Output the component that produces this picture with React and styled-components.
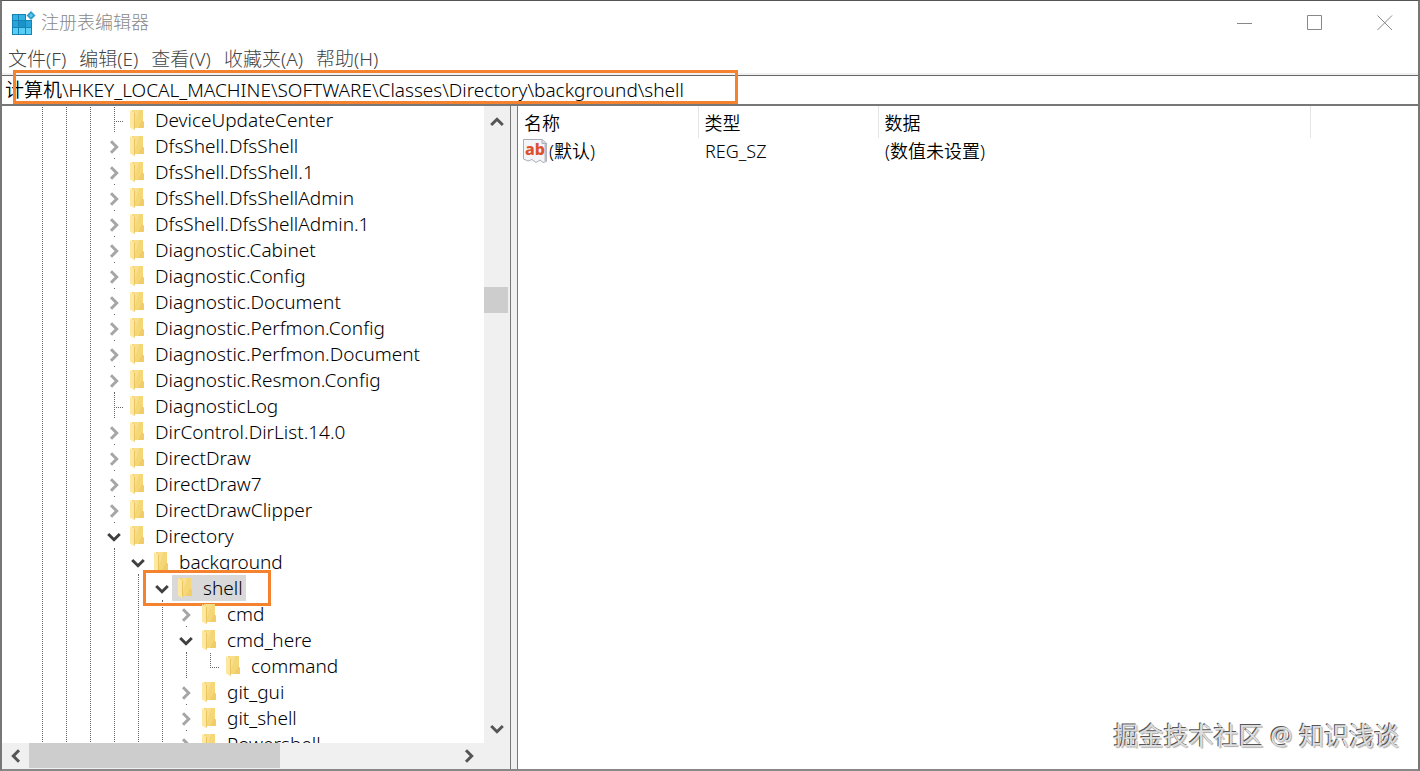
import React, {useState} from 'react'
import styled, {createGlobalStyle} from 'styled-components'

const nodes = [
    {name: 'DeviceUpdateCenter', depth: 3},
    {name: 'DfsShell.DfsShell', depth: 3, state: 'closed'},
    {name: 'DfsShell.DfsShell.1', depth: 3, state: 'closed'},
    {name: 'DfsShell.DfsShellAdmin', depth: 3, state: 'closed'},
    {name: 'DfsShell.DfsShellAdmin.1', depth: 3, state: 'closed'},
    {name: 'Diagnostic.Cabinet', depth: 3, state: 'closed'},
    {name: 'Diagnostic.Config', depth: 3, state: 'closed'},
    {name: 'Diagnostic.Document', depth: 3, state: 'closed'},
    {name: 'Diagnostic.Perfmon.Config', depth: 3, state: 'closed'},
    {name: 'Diagnostic.Perfmon.Document', depth: 3, state: 'closed'},
    {name: 'Diagnostic.Resmon.Config', depth: 3, state: 'closed'},
    {name: 'DiagnosticLog', depth: 3},
    {name: 'DirControl.DirList.14.0', depth: 3, state: 'closed'},
    {name: 'DirectDraw', depth: 3, state: 'closed'},
    {name: 'DirectDraw7', depth: 3, state: 'closed'},
    {name: 'DirectDrawClipper', depth: 3, state: 'closed'},
    {name: 'Directory', depth: 3, state: 'open'},
    {name: 'background', depth: 4, state: 'open'},
    {name: 'shell', depth: 5, state: 'open', marked: true},
    {name: 'cmd', depth: 6, state: 'closed'},
    {name: 'cmd_here', depth: 6, state: 'open'},
    {name: 'command', depth: 7, last: true},
    {name: 'git_gui', depth: 6, state: 'closed'},
    {name: 'git_shell', depth: 6, state: 'closed'},
    {name: 'Powershell', depth: 6, state: 'closed'},
]

const menus = ['文件(F)', '编辑(E)', '查看(V)', '收藏夹(A)', '帮助(H)']

const turns = {right: 0, down: 90, left: 180, up: 270}

function Chevron({to, color}) {
    return (
        <svg width="14" height="14" viewBox="0 0 14 14" aria-hidden="true">
            <path d="M4 1.2 9.700 7 4 12.800" fill="none" stroke={color} strokeWidth="3"
                transform={`rotate(${turns[to]} 7 7)`} />
        </svg>
    )
}

function Folder() {
    return (
        <svg width="14" height="21" viewBox="0 0 14 21" aria-hidden="true">
            <path d="M2 0H13V11L14 12V18H2Z" fill="#f5d778" />
            <path d="M4 0H9L5 14Z" fill="#f9df8d" />
            <path d="M12 10 14 12V18H8Z" fill="#f1cd68" />
            <path d="M0 0 4.5 3V20.5L0 17.5Z" fill="#fde7a2" />
            <path d="M4 3H5V18L4 20Z" fill="#e9c55f" />
        </svg>
    )
}

function RegistryIcon() {
    return (
        <svg width="24" height="24" viewBox="0 0 24 24" aria-hidden="true">
            <path d="M0 3H14V9H20V24H0Z" fill="#1583b5" />
            <path d="M1 4H6V9H1ZM7 4H13V9H7Z" fill="#35b3e3" />
            <path d="M1 10H6V16H1ZM14 10H19V16H14Z" fill="#27a5da" />
            <path d="M7 10H13V16H7Z" fill="#1b93c8" />
            <path d="M1 17H6V23H1ZM7 17H13V23H7ZM14 17H19V23H14Z" fill="#58cdf5" />
            <path d="M19 0 23.5 4.5 19 9 14.5 4.5Z" fill="#2b9fce" />
            <path d="M19 2.500 21 4.5 19 6.500 17 4.5Z" fill="#68c4e8" />
        </svg>
    )
}

function StringIcon() {
    return (
        <svg width="24" height="24" viewBox="0 0 24 24" aria-hidden="true">
            <path d="M.5.5H19L23.500 4V22.500L20 23.500 17 21 13 23.500 9 20.500 5 22 .5 20Z" fill="#f4f5f8" stroke="#a9adb5" />
            <path d="M19 .5V4.500H23.500" fill="#ddd" stroke="#a9adb5" />
            <path d="M22.500 5V22" stroke="#b9bcc4" strokeWidth="2" />
            <text x="2" y="16" fontFamily="Noto Sans" fontSize="16" fontWeight="800" fill="#dc5130">ab</text>
        </svg>
    )
}

function TreeRow({node, selected, onSelect}) {
    return (
        <Row>
            {Array.from({length: node.depth}, (_, i) => <Guide key={i} />)}
            {node.state ? (
                <Expander aria-label={node.name}>
                    <Chevron to={node.state === 'open' ? 'down' : 'right'}
                        color={node.state === 'open' ? '#404040' : '#a6a6a6'} />
                </Expander>
            ) : <Branch $last={node.last} />}
            <Item $selected={selected} onClick={onSelect}>
                <Folder />
                {node.name}
                {node.marked && <ItemMark />}
            </Item>
        </Row>
    )
}

function App() {
    const [selected, setSelected] = useState('shell')
    const [path, setPath] = useState('计算机\\HKEY_LOCAL_MACHINE\\SOFTWARE\\Classes\\Directory\\background\\shell')
    return (
        <Window>
            <GlobalStyle />
            <TitleBar>
                <RegistryIcon />
                <Title>注册表编辑器</Title>
                <Caption aria-label="最小化">
                    <svg width="16" height="16"><path d="M0 8.5H15" stroke="#888" /></svg>
                </Caption>
                <Caption aria-label="最大化">
                    <svg width="16" height="16"><path d="M.5.5H14.500V14.500H.5Z" fill="none" stroke="#888" /></svg>
                </Caption>
                <Caption aria-label="关闭">
                    <svg width="16" height="16"><path d="M.5.5 15 15M15 .5.5 15" stroke="#888" /></svg>
                </Caption>
            </TitleBar>
            <MenuBar>
                {menus.map(menu => <MenuButton key={menu}>{menu}</MenuButton>)}
            </MenuBar>
            <AddressBar>
                <Address aria-label="地址" value={path} onChange={e => setPath(e.target.value)} />
                <AddressMark />
            </AddressBar>
            <Panes>
                <TreePane>
                    <Tree>
                        {nodes.map(node => (
                            <TreeRow key={node.name} node={node} selected={selected === node.name}
                                onSelect={() => setSelected(node.name)} />
                        ))}
                    </Tree>
                    <VerticalBar>
                        <BarButton aria-label="向上"><Chevron to="up" color="#555" /></BarButton>
                        <VerticalTrack><VerticalThumb /></VerticalTrack>
                        <BarButton aria-label="向下"><Chevron to="down" color="#555" /></BarButton>
                    </VerticalBar>
                    <HorizontalBar>
                        <BarButton aria-label="向左"><Chevron to="left" color="#555" /></BarButton>
                        <HorizontalTrack><HorizontalThumb /></HorizontalTrack>
                        <BarButton aria-label="向右"><Chevron to="right" color="#555" /></BarButton>
                    </HorizontalBar>
                </TreePane>
                <ValuePane>
                    <Values>
                        <colgroup>
                            <col width="180" />
                            <col width="180" />
                            <col width="432" />
                            <col />
                        </colgroup>
                        <thead>
                            <tr><th>名称</th><th>类型</th><th>数据</th><td /></tr>
                        </thead>
                        <tbody>
                            <tr>
                                <td><ValueName><StringIcon />(默认)</ValueName></td>
                                <td>REG_SZ</td>
                                <td>(数值未设置)</td>
                                <td />
                            </tr>
                        </tbody>
                    </Values>
                    <Watermark>掘金技术社区 @ 知识浅谈</Watermark>
                </ValuePane>
            </Panes>
        </Window>
    )
}

export default App

const GlobalStyle = createGlobalStyle`
*{
    box-sizing:border-box;
}
body{
    margin:0;
    background:#fff;
    color:#000;
    font-family:"Noto Sans", "Noto Sans CJK SC", sans-serif;
    font-size:19px;
    font-weight:350;
    line-height:26px;
}
button, input{
    font:inherit;
    color:inherit;
    border:0;
    padding:0;
    background:none;
}
svg{
    display:block;
    flex:none;
}
`
const Window = styled.div`
display:flex;
flex-direction:column;
height:100vh;
border:1px solid #555;
border-left:2px solid #777;
border-right:2px solid #777;
border-bottom:2px solid #888;
`
const TitleBar = styled.header`
display:flex;
align-items:center;
height:44px;
padding-left:10px;
color:#888;
`
const Title = styled.h1`
flex:1;
margin:0 0 2px 5px;
font-size:18px;
font-weight:300;
`
const Caption = styled.button`
display:grid;
place-items:center;
width:70px;
height:44px;
padding-left:4px;
`
const MenuBar = styled.nav`
display:flex;
gap:13px;
height:30px;
padding-left:6px;
border-bottom:2px solid #f0f0f0;
color:#444;
font-weight:300;
`
const MenuButton = styled.button`
height:28px;
white-space:nowrap;
`
const AddressBar = styled.div`
position:relative;
border-top:1px solid #666;
border-bottom:2px solid #777;
height:31px;
`
const Address = styled.input`
display:block;
width:100%;
height:28px;
padding:0 0 2px 3px;
outline:0;
`
const AddressMark = styled.span`
position:absolute;
left:11px;
top:-6px;
width:725px;
height:34px;
border:3px solid #f5822f;
pointer-events:none;
`
const Panes = styled.main`
display:flex;
flex:1;
min-height:0;
background:#f0f0f0;
`
const TreePane = styled.section`
display:grid;
grid-template:minmax(0, 1fr) 26px / minmax(0, 1fr) 26px;
width:509px;
border-right:1px solid #777;
`
const Tree = styled.ul`
margin:0;
padding:1px 0 0 26px;
overflow:hidden;
list-style:none;
background:#fff;
`
const Row = styled.li`
display:flex;
height:26px;
`
const Guide = styled.span`
width:24px;
background:linear-gradient(#666 50%, transparent 50%) 14px 0 / 1px 2px repeat-y;
`
const Expander = styled.button`
display:grid;
place-items:center;
width:24px;
padding:2px 0 0 4px;
background:linear-gradient(#666, #666) 14px 100% / 1px 1px no-repeat;
`
const Branch = styled.span`
width:24px;
background:
    linear-gradient(90deg, #666 50%, transparent 50%) 0 14px / 2px 1px repeat-x content-box,
    linear-gradient(#666 50%, transparent 50%) 14px 0 / 1px 2px repeat-y;
background-origin:border-box;
padding-left:14px;
height:${props => props.$last ? '15px' : '26px'};
`
const Item = styled.button`
position:relative;
display:flex;
gap:11px;
padding:0 3px 0 6px;
white-space:nowrap;
background:${props => props.$selected ? '#d9d9d9' : 'transparent'};
svg{
    margin-top:3px;
}
`
const ItemMark = styled.span`
position:absolute;
inset:-5px -25px -5px -29px;
border:3px solid #f5822f;
pointer-events:none;
`
const VerticalBar = styled.div`
display:flex;
flex-direction:column;
padding:3px 0 1px;
`
const BarButton = styled.button`
display:grid;
place-items:center;
flex:none;
width:26px;
height:26px;
`
const VerticalTrack = styled.div`
flex:1;
padding-top:152px;
`
const VerticalThumb = styled.div`
width:24px;
height:26px;
background:#cdcdcd;
`
const HorizontalBar = styled.div`
display:flex;
margin-right:2px;
padding-left:1px;
`
const HorizontalTrack = styled.div`
flex:1;
`
const HorizontalThumb = styled.div`
width:251px;
height:25px;
background:#cdcdcd;
`
const ValuePane = styled.section`
position:relative;
flex:1;
margin-left:6px;
border-left:1px solid #777;
background:#fff;
`
const Values = styled.table`
width:100%;
table-layout:fixed;
border-collapse:collapse;
font-size:18px;
th, td{
    padding:0 0 0 7px;
    text-align:left;
    font-weight:350;
}
th{
    height:32px;
    padding:2px 0 0 6px;
    border-right:1px solid #e5e5e5;
}
td:first-child{
    padding-left:5px;
}
`
const ValueName = styled.span`
display:flex;
align-items:center;
gap:2px;
`
const Watermark = styled.p`
position:absolute;
right:19px;
bottom:16px;
margin:0;
color:#ddd;
font-size:25px;
font-weight:400;
line-height:36px;
text-shadow:-1px -1px 0 #555, 1px 1px 1px #aaa;
`
